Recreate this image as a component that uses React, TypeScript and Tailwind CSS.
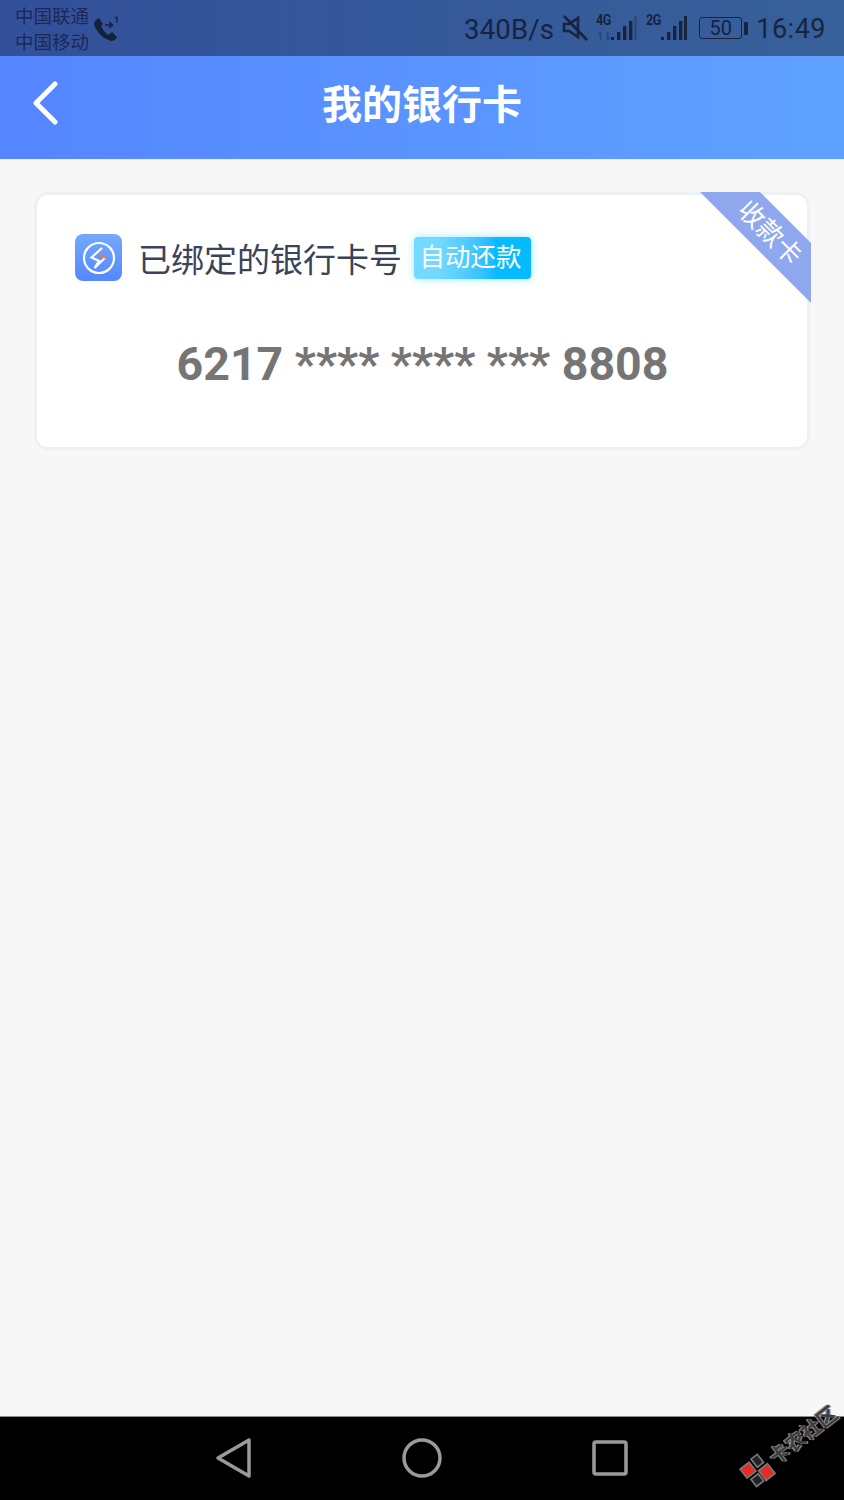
const cjk = "font-['Roboto','Noto_Sans_CJK_SC',sans-serif]";

const Bars = ({ dim }: { dim?: boolean }) => (
  <svg width="26" height="26" viewBox="0 0 26 26" fill="#17233f" className="shrink-0">
    <rect x="0" y="22" width="3" height="3" />
    <rect x="6" y="17" width="3.4" height="8" />
    <rect x="12" y="11" width="3.4" height="14" />
    <rect x="18" y="6" width="3.4" height="19" />
    <rect x="23" y="1" width="3" height="24" opacity={dim ? 0.25 : 1} />
  </svg>
);

const StatusBar = () => (
  <div className="h-14 bg-gradient-to-r from-[#33509a] to-[#376099] flex items-center justify-between pl-[15px] pr-[18px] text-[#17233f]">
    <div className="flex items-center">
      <div className={`${cjk} text-[18.500px] leading-[26px] w-[78px] mt-[3px] text-[#1a2a55]`}>
        <div>中国联通</div>
        <div>中国移动</div>
      </div>
      <svg width="28" height="28" viewBox="0 0 28 28" className="mt-[1px]">
        <path d="M2 6 Q0 9 3 14 Q8 23 18 26 Q22 26 24 22 L19 17 L15 20 Q10 16 8 11 L10 9 L6 3 Z" fill="#14203c" />
        <path d="M12 10 H19 M16 7 L19.500 10 L16 13" stroke="#14203c" strokeWidth="1.500" fill="none" />
        <path d="M22 3 L24 2 V8" stroke="#14203c" strokeWidth="1.200" fill="none" />
      </svg>
    </div>
    <div className="flex items-center">
      <span className="font-['Roboto',sans-serif] text-[27.500px] leading-none tracking-[0.2px] mr-[8px] mt-[3px]">340B/s</span>
      <svg width="26" height="28" viewBox="0 0 26 28" fill="none" stroke="#17233f" strokeWidth="2.600" className="mr-[8px]">
        <path d="M2 10 H7 L16 4 V23 L7 17 H2 Z" />
        <path d="M2 2 L25 26" />
      </svg>
      <div className="relative w-[41px] h-[28px] mr-[9px]">
        <span className="absolute left-0 -top-[1px] font-['Roboto',sans-serif] font-bold text-[14px] leading-none tracking-[-0.5px] scale-x-90 origin-left">4G</span>
        <span className="absolute left-0 bottom-[0px] font-['Roboto',sans-serif] font-bold text-[11px] leading-none tracking-[-2px] opacity-40">↿⇂</span>
        <div className="absolute right-0 top-[1px]"><Bars dim /></div>
      </div>
      <div className="relative w-[41px] h-[28px] mr-[12px]">
        <span className="absolute left-0 -top-[1px] font-['Roboto',sans-serif] font-bold text-[14px] leading-none tracking-[-0.5px] scale-x-90 origin-left">2G</span>
        <div className="absolute right-0 top-[1px]"><Bars /></div>
      </div>
      <div className="w-[43px] h-[22px] rounded-[3px] border border-[#17233f] flex items-center justify-center font-['Roboto',sans-serif] text-[20px] leading-none">50</div>
      <div className="w-[4px] h-[13px] bg-[#17233f] rounded-[1px] ml-[2px] mr-[8px]"></div>
      <span className="font-['Roboto',sans-serif] text-[27px] leading-none tracking-[0.5px] mt-[3px]">16:49</span>
    </div>
  </div>
);

const Header = () => (
  <div className="relative h-[104px] bg-gradient-to-r from-[#5585ff] to-[#5fa2ff] flex items-center justify-center border-b border-[#e9edf5]">
    <svg width="30" height="44" viewBox="0 0 30 44" fill="none" stroke="white" strokeWidth="5" strokeLinecap="round" strokeLinejoin="round" className="absolute left-[31px] top-[25px]">
      <path d="M24 3 L5 22 L24 41" />
    </svg>
    <h1 className={`${cjk} text-white text-[40px] font-bold leading-none -mt-[4px]`}>我的银行卡</h1>
  </div>
);

const Logo = () => (
  <div className="w-[47px] h-[47px] rounded-[8px] bg-gradient-to-b from-[#74a8ff] to-[#5587ff] flex items-center justify-center shrink-0">
    <svg width="34" height="34" viewBox="0 0 34 34" fill="none" stroke="white" strokeWidth="2.200">
      <circle cx="17" cy="17" r="15" />
      <path d="M20 7 L9.500 16.500 L17 20 L12.500 27 L23 17" />
      <path d="M18 14 L23.500 16.700" stroke="#f58220" strokeWidth="2.500" />
    </svg>
  </div>
);

const Ribbon = () => (
  <>
    <div className="absolute -top-[3px] -right-[4px] w-[111px] h-[111px] bg-[#90a8ee] [clip-path:polygon(0_0,54%_0,100%_46%,100%_100%)]"></div>
    <span className={`${cjk} absolute top-[25px] -right-[6px] w-[86px] text-center rotate-45 text-white text-[26px] leading-none`}>收款卡</span>
  </>
);

const Card = () => (
  <div className="relative h-[258px] rounded-[14px] border-[3px] border-[#ecf1f3] bg-white">
    <Ribbon />
    <div className="flex items-center pl-[38px] pt-[39px]">
      <Logo />
      <span className={`${cjk} ml-[16px] mt-[6px] text-[33px] leading-none text-[#3a4358]`}>已绑定的银行卡号</span>
      <span className={`${cjk} ml-[12px] mt-[1px] pr-[4px] w-[117px] h-[42px] rounded-[4px] bg-gradient-to-r from-[#74d9ff] from-20% to-[#05bbff] to-70% shadow-[0_0_8px_#9fe6ff] flex items-center justify-center text-white text-[25.500px] leading-none`}>自动还款</span>
    </div>
    <div className="mt-[60px] pl-[1px] text-center font-['Roboto',sans-serif] font-bold text-[46.500px] leading-none text-[#757575]">6217 **** **** *** 8808</div>
  </div>
);

const NavBar = () => (
  <div className="relative h-[84px] bg-black flex items-center justify-center border-t border-[#8a8a8a]">
    <div className="flex items-center gap-[144px] -mt-[2px]">
      <svg width="44" height="44" viewBox="0 0 44 44" fill="none" stroke="#9a9a9a" strokeWidth="3.500" strokeLinejoin="round">
        <path d="M37 4 L6 22 L37 40 Z" />
      </svg>
      <svg width="44" height="44" viewBox="0 0 44 44" fill="none" stroke="#9a9a9a" strokeWidth="3.500">
        <circle cx="22" cy="22" r="18" />
      </svg>
      <svg width="44" height="44" viewBox="0 0 44 44" fill="none" stroke="#9a9a9a" strokeWidth="3.500">
        <rect x="6" y="6" width="32" height="32" rx="2" />
      </svg>
    </div>
    <div className="absolute left-[733px] top-[12px] -rotate-[38deg] flex items-center origin-center whitespace-nowrap">
      <svg width="34" height="34" viewBox="0 0 30 30" className="shrink-0">
        <g stroke="#777" strokeWidth="1.500">
          <rect x="3" y="4" width="10" height="10" fill="#e82a24" />
          <rect x="16" y="3" width="7" height="9" fill="#222" />
          <rect x="5" y="17" width="8" height="8" fill="#222" />
          <rect x="15" y="15" width="10" height="11" fill="#e82a24" />
        </g>
      </svg>
      <span className={`${cjk} text-[20px] leading-none font-bold text-[#3d3d3d] [text-shadow:1px_1px_0_#8d8d8d,-1px_-1px_0_#8d8d8d]`}>卡农社区</span>
    </div>
  </div>
);

export default function App() {
  return (
    <div className="w-[844px] h-[1500px] flex flex-col bg-[#f7f7f7] overflow-hidden">
      <StatusBar />
      <Header />
      <main className="flex-1 pt-[32px] pl-[34px] pr-[34px]">
        <Card />
      </main>
      <NavBar />
    </div>
  );
}
